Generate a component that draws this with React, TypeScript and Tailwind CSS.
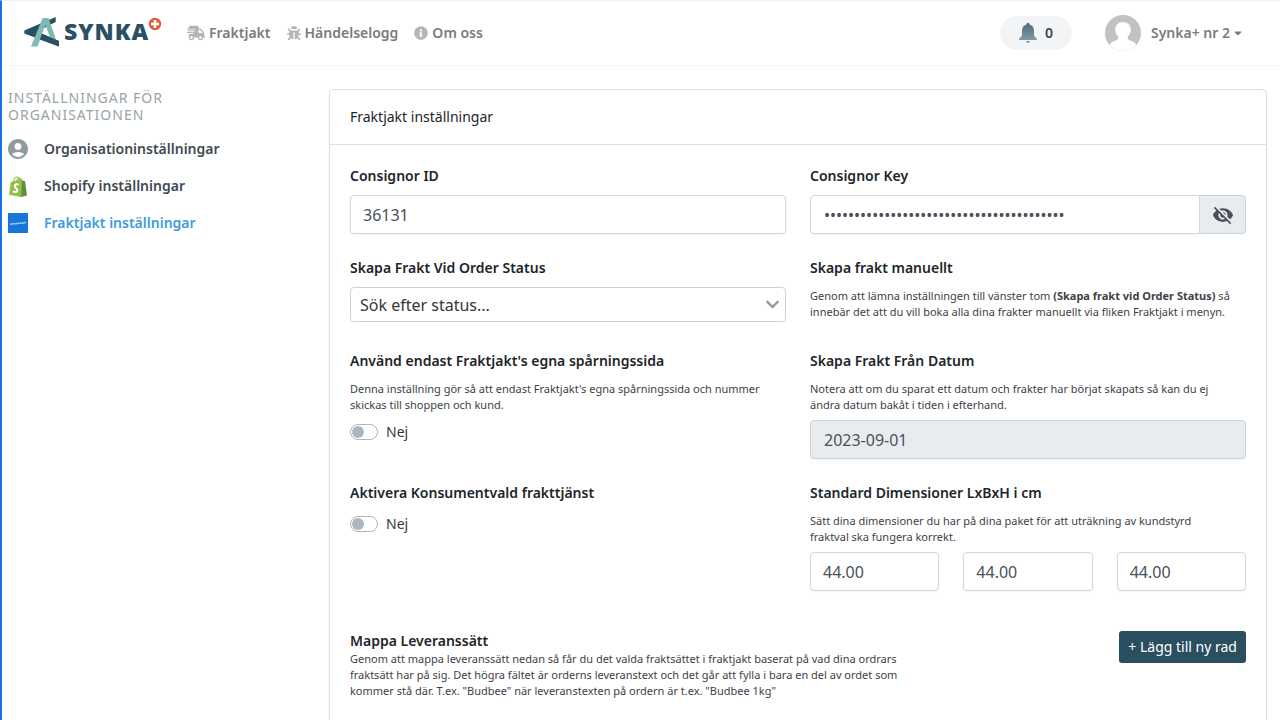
import { useState } from "react";
import type { ReactNode } from "react";
import { FaBug, FaCaretDown, FaChevronDown, FaInfoCircle, FaShippingFast } from "react-icons/fa";
import { MdAccountCircle, MdVisibilityOff } from "react-icons/md";

const inputClass =
  "h-[39px] w-full rounded border border-[#cfd8df] bg-white px-3 text-base text-[#495057] shadow-xs outline-none focus:border-[#80bdff]";

function Logo() {
  return (
    <svg viewBox="0 0 140 34" className="h-[34px] w-[140px]" role="img" aria-label="Synka+">
      <path d="M32.700 1V6L14 15.500L36 25V30.500L1.300 17.500V14.500Z" fill="#2a5064" />
      <path d="M19.600 2H25.500L33.500 25L27.500 22.500L22.300 9L14.600 30.500H8Z" fill="#7dbab5" />
      <path d="M19 17.700L36 25V30.500L17 23.400Z" fill="#2a5064" />
      <text x="41" y="24" fill="#2a5064" fontFamily="Open Sans, sans-serif" fontWeight="800" fontSize="23" letterSpacing="1">
        SYNKA
      </text>
      <circle cx="132" cy="8" r="6.200" fill="#e0603c" />
      <path d="M132 4V12M128 8H136" stroke="white" strokeWidth="2.600" />
    </svg>
  );
}

function Bell() {
  return (
    <svg viewBox="0 0 18 20" className="h-5 w-[18px]" aria-hidden="true">
      <defs>
        <linearGradient id="bell" x1="0" y1="0" x2="0" y2="1">
          <stop offset="0" stopColor="#506b7c" />
          <stop offset="1" stopColor="#8299a8" />
        </linearGradient>
      </defs>
      <path
        d="M9 0C10 0 10.800.7 10.800 1.700C13.500 2.400 15 4.500 15 7.500V12C15 13.800 18 14.800 18 17H0C0 14.800 3 13.800 3 12V7.500C3 4.500 4.500 2.400 7.200 1.700C7.200.7 8 0 9 0Z"
        fill="url(#bell)"
      />
      <path d="M7 18H11C11 19.300 10 20 9 20S7 19.300 7 18Z" fill="#8ba0ae" />
    </svg>
  );
}

function Avatar() {
  return (
    <svg viewBox="0 0 36 36" className="size-9" aria-hidden="true">
      <clipPath id="avatar">
        <circle cx="18" cy="18" r="18" />
      </clipPath>
      <g clipPath="url(#avatar)">
        <rect width="36" height="36" fill="#c2c2c2" />
        <path
          d="M18 7C22.500 7 25.800 10 25.800 14.500C25.800 17.500 24.500 20 22.700 21.700C22.300 24 23.500 25 26 25.800C29.500 27 31 28.500 31.500 31V36H4.500V31C5 28.500 6.500 27 10 25.800C12.500 25 13.700 24 13.300 21.700C11.500 20 10.200 17.500 10.200 14.500C10.200 10 13.500 7 18 7Z"
          fill="white"
        />
      </g>
    </svg>
  );
}

function ShopifyIcon() {
  return (
    <svg viewBox="0 0 20 21" className="h-[21px] w-5" aria-hidden="true">
      <path d="M2.800 6L13.500 3L13 21L1 18.800Z" fill="#95bf47" />
      <path d="M13.500 3.200L15 4.800L17 5L19 19.500L13 21Z" fill="#5e8e3e" />
      <path d="M5.200 6.500C5.800 3.200 7.500 1 9.300 1C11 1 11.700 2.800 11.700 5M8.700 5.500C9 3.200 10 2 11.300 2C12.300 2 13 3 13.200 4.300" fill="none" stroke="#95bf47" strokeWidth="1.200" />
      <path d="M10.600 8.700C8.500 7.700 6.700 8.600 6.800 10.300C6.900 12.200 9.500 12.300 9.300 14.500C9.100 16.400 6.500 16.500 5 15.100" fill="none" stroke="white" strokeWidth="2" />
    </svg>
  );
}

function FraktjaktIcon() {
  return (
    <svg viewBox="0 0 20 20" className="size-5" aria-hidden="true">
      <rect width="20" height="20" fill="#1976d9" />
      <path d="M2 11.200L5 10.800L8 10.700L11 10.300L14 10.200L18 9.300" stroke="#b9d9f7" strokeWidth="1.600" strokeDasharray="1.500 .4" fill="none" />
    </svg>
  );
}

function NavLink({ icon, children }: { icon: ReactNode; children: ReactNode }) {
  return (
    <a href="#" className="flex items-center gap-1 text-[#7b7b7b]">
      <span className="text-[#b5b5b5]">{icon}</span>
      {children}
    </a>
  );
}

function SideLink({ icon, active, children }: { icon: ReactNode; active?: boolean; children: ReactNode }) {
  return (
    <a href="#" className={active ? "flex items-center gap-4 text-[#3d9be0]" : "flex items-center gap-4 text-[#3f4a52]"}>
      <span className="flex h-5 w-5 items-center justify-center">{icon}</span>
      {children}
    </a>
  );
}

const labelClass = "block text-sm leading-5 font-semibold text-[#212529]";

function Help({ children }: { children: ReactNode }) {
  return <p className="text-[11px] leading-4 text-[#3d4246]">{children}</p>;
}

function Toggle({ id }: { id: string }) {
  const [on, setOn] = useState(false);
  return (
    <div className="flex h-6 items-center gap-2">
      <input
        id={id}
        type="checkbox"
        role="switch"
        checked={on}
        onChange={(e) => setOn(e.target.checked)}
        className="flex h-4 w-7 appearance-none items-center rounded-full border border-[#adb5bd] bg-white px-px before:size-3 before:rounded-full before:bg-[#adb5bd] checked:justify-end"
      />
      <span className="text-sm leading-6 text-[#343a40]">{on ? "Ja" : "Nej"}</span>
    </div>
  );
}

export default function App() {
  const [visible, setVisible] = useState(false);
  return (
    <div className="min-h-screen border-t border-l-2 border-t-[#edf0f8] border-l-[#1573e6] bg-white font-['Noto_Sans',sans-serif] text-[#212529]">
      <header className="flex h-[65px] items-center border-b border-[#f3f4f7] pr-9 pl-[21px] text-sm font-semibold">
        <a href="#">
          <Logo />
        </a>
        <nav className="ml-6 flex items-center gap-4">
          <NavLink icon={<FaShippingFast className="h-4 w-[18px] text-base" />}>Fraktjakt</NavLink>
          <NavLink icon={<FaBug className="size-[14px]" />}>Händelselogg</NavLink>
          <NavLink icon={<FaInfoCircle className="size-[14px]" />}>Om oss</NavLink>
        </nav>
        <button type="button" className="ml-auto flex h-[34px] w-[72px] items-center justify-center gap-2 rounded-full bg-[#f3f4f5] text-[#36474f]">
          <Bell />0
        </button>
        <button type="button" className="ml-[33px] flex items-center gap-[10px] text-[#7b7b7b]">
          <Avatar />
          <span className="flex items-center gap-0.5">
            Synka+ nr 2 <FaCaretDown className="size-3" />
          </span>
        </button>
      </header>

      <div className="grid grid-cols-[309px_1fr] gap-3 pr-[13px] pl-[6px]">
        <aside className="pt-[23px]">
          <h2 className="max-w-[200px] text-sm leading-[17px] tracking-[1px] text-[#98a4aa] uppercase">Inställningar för organisationen</h2>
          <nav className="mt-4 flex flex-col gap-[17px] text-sm leading-5 font-semibold">
            <SideLink icon={<MdAccountCircle className="size-6 shrink-0 text-[#8f9ba3]" />}>Organisationinställningar</SideLink>
            <SideLink icon={<ShopifyIcon />}>Shopify inställningar</SideLink>
            <SideLink active icon={<FraktjaktIcon />}>
              Fraktjakt inställningar
            </SideLink>
          </nav>
        </aside>

        <main className="mt-[23px] rounded border border-[#dedfe1] pb-10 shadow-xs">
          <h1 className="border-b border-[#dedfe1] px-5 py-[17px] text-sm leading-5">Fraktjakt inställningar</h1>
          <form className="grid grid-cols-2 gap-6 px-5 pt-[21px]" onSubmit={(e) => e.preventDefault()}>
            <div className="flex flex-col gap-[9px]">
              <label htmlFor="cid" className={labelClass}>Consignor ID</label>
              <input id="cid" type="text" defaultValue="36131" className={inputClass} />
            </div>
            <div className="flex flex-col gap-[9px]">
              <label htmlFor="ckey" className={labelClass}>Consignor Key</label>
              <div className="flex">
                <input
                  id="ckey"
                  type={visible ? "text" : "password"}
                  defaultValue="0000000000000000000000000000000000000000"
                  className="h-[39px] min-w-0 flex-1 rounded-l border border-[#cfd8df] bg-white px-[13px] text-base text-[#495057] shadow-xs outline-none"
                />
                <button
                  type="button"
                  aria-label="Visa nyckel"
                  onClick={() => setVisible(!visible)}
                  className="flex w-[46px] items-center justify-center rounded-r border border-l-0 border-[#cbd3da] bg-[#e9ecef] text-[#495057]"
                >
                  <MdVisibilityOff className="size-[22px]" />
                </button>
              </div>
            </div>

            <div className="flex min-h-[69px] flex-col gap-[9px]">
              <label htmlFor="status" className={labelClass}>Skapa Frakt Vid Order Status</label>
              <div className="relative">
                <select id="status" className="h-[35px] w-full appearance-none rounded border border-[#ced0d2] bg-white px-[9px] text-base text-[#33383c] outline-none">
                  <option>Sök efter status...</option>
                </select>
                <FaChevronDown className="pointer-events-none absolute top-[10px] right-[6px] size-[15px] text-[#999]" />
              </div>
            </div>
            <section className="flex flex-col gap-[10px]">
              <h2 className={labelClass}>Skapa frakt manuellt</h2>
              <Help>
                Genom att lämna inställningen till vänster tom <b className="font-bold">(Skapa frakt vid Order Status)</b> så innebär det att du vill boka alla dina frakter manuellt via fliken Fraktjakt i menyn.
              </Help>
            </section>

            <div className="flex flex-col gap-[10px]">
              <label htmlFor="tracking" className={labelClass}>Använd endast Fraktjakt's egna spårningssida</label>
              <div className="flex flex-col gap-[7px]">
                <Help>Denna inställning gör så att endast Fraktjakt's egna spårningssida och nummer skickas till shoppen och kund.</Help>
                <Toggle id="tracking" />
              </div>
            </div>
            <div className="flex flex-col gap-[10px]">
              <label htmlFor="date" className={labelClass}>Skapa Frakt Från Datum</label>
              <div className="flex flex-col gap-[7px]">
                <div className="max-w-[412px]">
                  <Help>Notera att om du sparat ett datum och frakter har börjat skapats så kan du ej ändra datum bakåt i tiden i efterhand.</Help>
                </div>
                <input
                  id="date"
                  type="text"
                  readOnly
                  value="2023-09-01"
                  className="h-[39px] w-full rounded border border-[#cbd3da] bg-[#e9ecef] px-[13px] text-base text-[#495057] shadow-xs outline-none"
                />
              </div>
            </div>

            <div className="flex flex-col gap-[9px]">
              <label htmlFor="consumer" className={labelClass}>Aktivera Konsumentvald frakttjänst</label>
              <Toggle id="consumer" />
            </div>
            <fieldset>
              <legend className={labelClass}>Standard Dimensioner LxBxH i cm</legend>
              <div className="mt-[10px] flex flex-col gap-[7px]">
                <div className="max-w-[412px]">
                  <Help>Sätt dina dimensioner du har på dina paket för att uträkning av kundstyrd fraktval ska fungera korrekt.</Help>
                </div>
                <div className="grid grid-cols-3 gap-6">
                  <input type="text" aria-label="Längd" defaultValue="44.00" className={inputClass} />
                  <input type="text" aria-label="Bredd" defaultValue="44.00" className={inputClass} />
                  <input type="text" aria-label="Höjd" defaultValue="44.00" className={inputClass} />
                </div>
              </div>
            </fieldset>

            <section className="col-span-2 mt-4 flex items-start justify-between">
              <div className="max-w-[570px]">
                <h2 className={labelClass}>Mappa Leveranssätt</h2>
                <Help>
                  Genom att mappa leveranssätt nedan så får du det valda fraktsättet i fraktjakt baserat på vad dina ordrars fraktsätt har på sig. Det högra fältet är orderns leveranstext och det går att fylla i bara en del av ordet som kommer stå där. T.ex. "Budbee" när leveranstexten på ordern är t.ex. "Budbee 1kg"
                </Help>
              </div>
              <button type="button" className="h-8 rounded-[3px] bg-[#2a4f61] px-[9px] text-sm text-white">
                + Lägg till ny rad
              </button>
            </section>
          </form>
        </main>
      </div>
    </div>
  );
}
